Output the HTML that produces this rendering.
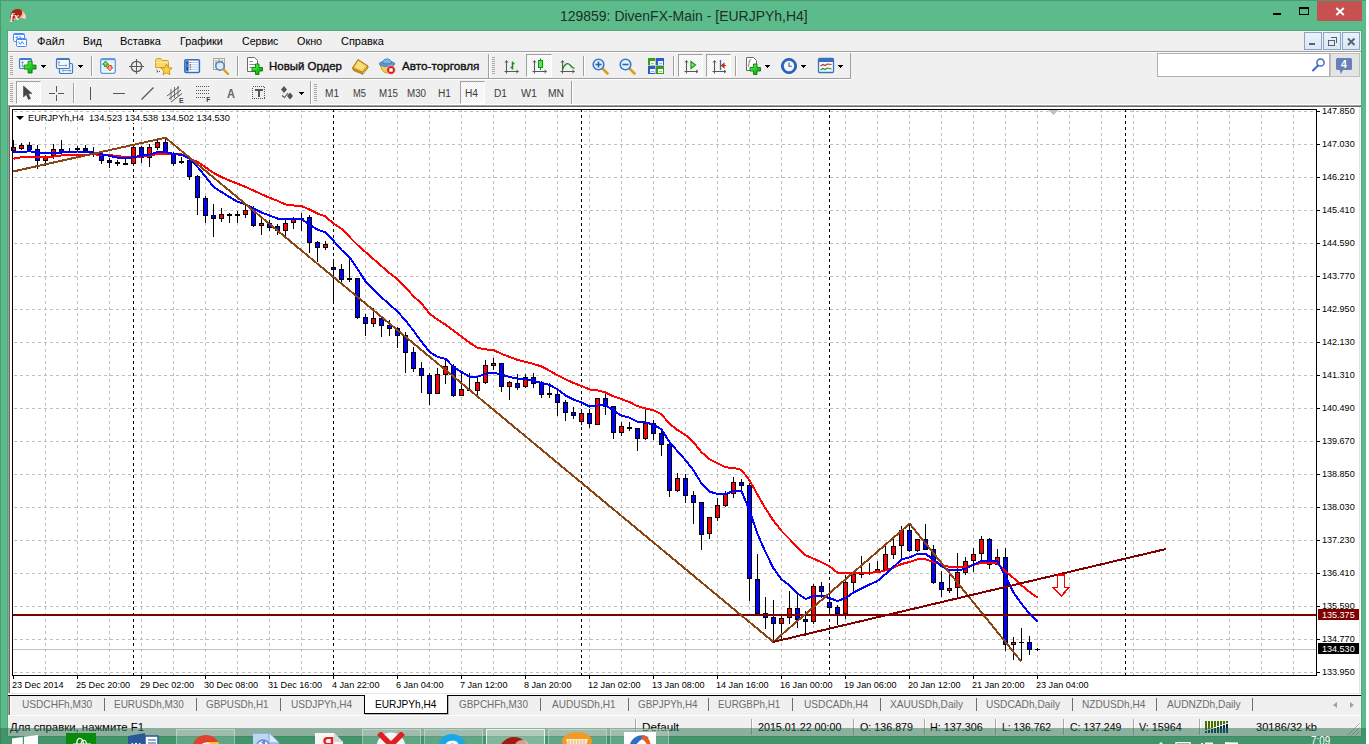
<!DOCTYPE html>
<html><head><meta charset="utf-8"><title>129859: DivenFX-Main - [EURJPYh,H4]</title>
<style>
html,body{margin:0;padding:0;background:#fff;}
body{width:1369px;height:744px;overflow:hidden;position:relative;font-family:"Liberation Sans",sans-serif;}
.abs{position:absolute;}
.sep{width:1px;background:#a0a0a0;}
</style></head><body>
<div class="abs" style="left:0;top:0;width:1366px;height:744px;background:#5CBB8B"></div>
<div class="abs" style="left:0;top:0;width:1366px;height:1px;background:#4a9a72"></div>
<div class="abs" style="left:0;top:0;width:1px;height:744px;background:#4a9a72"></div>
<div class="abs" style="left:7px;top:30px;width:1355px;height:707px;background:#50a87c"></div>
<div class="abs" style="left:8px;top:31px;width:1353px;height:705px;background:#F0F0F0"></div>
<div class="abs" style="left:560.30px;top:7.00px;font-size:15px;line-height:18px;color:#1c3026;white-space:pre;transform:scaleX(0.9314);transform-origin:0 0;">129859: DivenFX-Main - [EURJPYh,H4]</div>
<svg class="abs" style="left:9px;top:8px" width="18" height="14" viewBox="0 0 18 14"><path d="M1.2 11.5C0.2 5.5 4 0.8 8.5 1C13.5 1.2 17 5.5 16.8 10.8C14.5 10.8 11 9.2 8.2 10.2C6 11 4.8 13.2 2.6 13C1.8 12.8 1.4 12.3 1.2 11.5Z" fill="#c0301e"/><path d="M3 3.8C5 1.4 8.5 0.6 11 1.6C13 3 13.4 5.4 11.6 7.2C9.4 9 6 8.4 3.4 10Z" fill="#a82416"/><path d="M12.6 2.2C15.6 3.8 17 7 16.8 10.8C14.5 10.8 11.6 9.4 9 10C12.4 8.6 14.2 5.6 12.6 2.2Z" fill="#f4b8ac"/><path d="M14.4 4.2C16.2 6 16.9 8.4 16.8 10.8C15.6 10.7 14.2 10.3 12.8 9.9C14.6 8.6 15 6.4 14.4 4.2Z" fill="#fadcd6"/><text x="1.2" y="11.6" font-family="Liberation Serif" font-style="italic" font-weight="bold" font-size="10.5" fill="#fff">fx</text></svg>
<div class="abs" style="left:1273px;top:13px;width:8px;height:2px;background:#000;"></div>
<div class="abs" style="left:1299px;top:7px;width:8px;height:5px;border:1px solid #000;border-top:2px solid #000"></div>
<div class="abs" style="left:1317px;top:1px;width:45px;height:20px;background:#c75050;"></div>
<svg class="abs" style="left:1334px;top:6px" width="13" height="11" viewBox="0 0 13 11"><path d="M2.3 2L9.8 9M9.8 2L2.3 9" stroke="#fff" stroke-width="1.9" fill="none"/></svg>
<div class="abs" style="left:8px;top:51px;width:1353px;height:1px;background:#a0a0a0"></div>
<div class="abs" style="left:8px;top:52px;width:1353px;height:1px;background:#fff"></div>
<div class="abs" style="left:36.60px;top:33.92px;font-size:11.5px;line-height:14px;color:#000;white-space:pre;transform:scaleX(0.9691);transform-origin:0 0;">Файл</div>
<div class="abs" style="left:83.10px;top:33.92px;font-size:11.5px;line-height:14px;color:#000;white-space:pre;transform:scaleX(0.8988);transform-origin:0 0;">Вид</div>
<div class="abs" style="left:120.20px;top:33.92px;font-size:11.5px;line-height:14px;color:#000;white-space:pre;transform:scaleX(0.9569);transform-origin:0 0;">Вставка</div>
<div class="abs" style="left:180.30px;top:33.92px;font-size:11.5px;line-height:14px;color:#000;white-space:pre;transform:scaleX(0.9341);transform-origin:0 0;">Графики</div>
<div class="abs" style="left:241.60px;top:33.92px;font-size:11.5px;line-height:14px;color:#000;white-space:pre;transform:scaleX(0.9243);transform-origin:0 0;">Сервис</div>
<div class="abs" style="left:296.60px;top:33.92px;font-size:11.5px;line-height:14px;color:#000;white-space:pre;transform:scaleX(0.9393);transform-origin:0 0;">Окно</div>
<div class="abs" style="left:340.50px;top:33.92px;font-size:11.5px;line-height:14px;color:#000;white-space:pre;transform:scaleX(0.9509);transform-origin:0 0;">Справка</div>
<svg class="abs" style="left:11px;top:32px" width="18" height="17" viewBox="0 0 18 17"><rect x="2.5" y="1.5" width="11" height="8" rx="1" fill="#fff" stroke="#4a8af8"/><path d="M3 2.5H13" stroke="#4a8af8" stroke-width="1"/><path d="M4.5 5.5H6.5M5.8 4.3L6.8 5.5M8.5 4.3L10 6" stroke="#4a8af8" stroke-width="1.1" fill="none"/><rect x="5.5" y="6.5" width="10" height="8" rx="1" fill="#fff" stroke="#4a8af8"/><path d="M6 7.5H15" stroke="#4a8af8" stroke-width="1"/><path d="M7.3 9.4L9.3 12.4L11 9.6L13.2 12.5" stroke="#4a8af8" stroke-width="1" fill="none"/></svg>
<div class="abs" style="left:1304px;top:32px;width:16px;height:16px;border:1px solid #8da3c4;background:linear-gradient(#eaf2fb,#dbe8f6)"></div>
<div class="abs" style="left:1323px;top:32px;width:16px;height:16px;border:1px solid #8da3c4;background:linear-gradient(#eaf2fb,#dbe8f6)"></div>
<div class="abs" style="left:1342px;top:32px;width:16px;height:16px;border:1px solid #8da3c4;background:linear-gradient(#eaf2fb,#dbe8f6)"></div>
<div class="abs" style="left:1309px;top:43px;width:6px;height:2px;background:#5a6272;"></div>
<svg class="abs" style="left:1327px;top:36px" width="12" height="11" viewBox="0 0 12 11" shape-rendering="crispEdges"><path d="M3.5 1.5H9.5V6.5M1.5 4.5H7.5V9.5H1.5Z" stroke="#5a6272" stroke-width="1.4" fill="none"/></svg>
<svg class="abs" style="left:1346px;top:37px" width="12" height="11" viewBox="0 0 12 11"><path d="M2 1.5L8.5 8M8.5 1.5L2 8" stroke="#5a6272" stroke-width="1.9" fill="none"/></svg>
<div class="abs" style="left:8px;top:78px;width:843px;height:1px;background:#a0a0a0;"></div>
<div class="abs" style="left:8px;top:79px;width:843px;height:1px;background:#fff;"></div>
<div class="abs" style="left:850px;top:53px;width:1px;height:26px;background:#a0a0a0;"></div>
<svg class="abs" style="left:10px;top:56px" width="3" height="20" viewBox="0 0 3 20" shape-rendering="crispEdges"><rect x="0" y="0" width="3" height="1" fill="#a8a8a8"/><rect x="0" y="2" width="3" height="1" fill="#a8a8a8"/><rect x="0" y="4" width="3" height="1" fill="#a8a8a8"/><rect x="0" y="6" width="3" height="1" fill="#a8a8a8"/><rect x="0" y="8" width="3" height="1" fill="#a8a8a8"/><rect x="0" y="10" width="3" height="1" fill="#a8a8a8"/><rect x="0" y="12" width="3" height="1" fill="#a8a8a8"/><rect x="0" y="14" width="3" height="1" fill="#a8a8a8"/><rect x="0" y="16" width="3" height="1" fill="#a8a8a8"/><rect x="0" y="18" width="3" height="1" fill="#a8a8a8"/></svg>
<svg class="abs" style="left:18px;top:56px" width="20" height="19" viewBox="0 0 20 19"><defs><linearGradient id="gp" x1="0" y1="0" x2="1" y2="1"><stop offset="0" stop-color="#7dff7d"/><stop offset="0.5" stop-color="#22d022"/><stop offset="1" stop-color="#0a8a0a"/></linearGradient></defs><rect x="1.5" y="2.5" width="12" height="10" rx="1.2" fill="#f2f7ff" stroke="#3f7cc4" stroke-width="1.2"/><path d="M2 3.2H13" stroke="#3f7cc4" stroke-width="1.6"/><path d="M4.5 5.5V11M3 7L4.5 5.5L6 7M3 9.5L4.5 11L6 9.5" stroke="#7f9cc4" stroke-width="0.9" fill="none"/><path d="M10.1 5.2H14.1V9.1H18V13.1H14.1V17H10.1V13.1H6.2V9.1H10.1Z" fill="url(#gp)" stroke="#0a7a0a" stroke-width="0.9"/></svg>
<svg class="abs" style="left:41px;top:65px" width="5" height="3" viewBox="0 0 5 3" shape-rendering="crispEdges"><rect x="0" y="0" width="5" height="1" fill="#000"/><rect x="1" y="1" width="3" height="1" fill="#000"/><rect x="2" y="2" width="1" height="1" fill="#000"/></svg>
<svg class="abs" style="left:55px;top:56px" width="20" height="19" viewBox="0 0 20 19"><rect x="4.5" y="7.5" width="13" height="10" rx="1.2" fill="#eef4fd" stroke="#3f7cc4" stroke-width="1.2"/><path d="M7 14.5H16M7 14.5L8.5 13.3M7 14.5L8.5 15.7M16 14.5L14.5 13.3M16 14.5L14.5 15.7" stroke="#7f9cc4" stroke-width="0.9" fill="none"/><rect x="1.5" y="2.5" width="13" height="10" rx="1.2" fill="#f4f8ff" stroke="#3f7cc4" stroke-width="1.2"/><path d="M2 3.2H14" stroke="#3f7cc4" stroke-width="1.6"/><path d="M4 5.5V10.5M3 6.7L4 5.5L5 6.7M4 9.5H12M12 9.5L10.5 8.3M12 9.5L10.5 10.7" stroke="#7f9cc4" stroke-width="0.9" fill="none"/></svg>
<svg class="abs" style="left:78px;top:65px" width="5" height="3" viewBox="0 0 5 3" shape-rendering="crispEdges"><rect x="0" y="0" width="5" height="1" fill="#000"/><rect x="1" y="1" width="3" height="1" fill="#000"/><rect x="2" y="2" width="1" height="1" fill="#000"/></svg>
<div class="abs" style="left:91px;top:56px;width:1px;height:20px;background:#a0a0a0;"></div><div class="abs" style="left:92px;top:56px;width:1px;height:20px;background:#fff;"></div>
<svg class="abs" style="left:99px;top:57px" width="18" height="18" viewBox="0 0 18 18"><rect x="1.7" y="1.7" width="14.6" height="14.6" rx="1.8" fill="#f8fbff" stroke="#5b9bdc" stroke-width="1.3"/><path d="M2 2.6H16" stroke="#5b9bdc" stroke-width="1.4"/><path d="M11 5.5H15M11 8.5H15M4 11.5H8M4 13.5H8" stroke="#d4dce8" stroke-width="1"/><path d="M3.6 7.3L6.6 4L9.6 7.3H8V9.6H5.2V7.3Z" fill="#7fdc7f" stroke="#189018" stroke-width="1"/><path d="M7.9 10.4L10.9 13.9L13.9 10.4H12.3V8.4H9.5V10.4Z" fill="#ffb090" stroke="#d84818" stroke-width="1"/></svg>
<svg class="abs" style="left:128px;top:58px" width="18" height="18" viewBox="0 0 18 18"><circle cx="8.5" cy="8.5" r="5.2" fill="none" stroke="#5a5a5a" stroke-width="1.3"/><path d="M8.5 1V16M1 8.5H16" stroke="#5a5a5a" stroke-width="1.1"/></svg>
<svg class="abs" style="left:154px;top:56px" width="20" height="20" viewBox="0 0 20 20"><path d="M1.5 4.5Q1.5 2.5 3.5 2.5H7L8.5 4.5H13.5Q14.5 4.5 14.5 5.5V11.5H1.5Z" fill="#f8d870" stroke="#d4a020" stroke-width="1"/><path d="M1.5 6.5H14.5" stroke="#fbe9a8" stroke-width="1"/><path d="M3 13.5V17M3 15.5H6" stroke="#555" stroke-width="1" stroke-dasharray="1 1"/><path d="M12.5 8L14.2 11.6L18.2 12.1L15.3 14.8L16 18.7L12.5 16.8L9 18.7L9.7 14.8L6.8 12.1L10.8 11.6Z" fill="#f8d040" stroke="#c89010" stroke-width="0.9"/></svg>
<svg class="abs" style="left:183px;top:57px" width="18" height="18" viewBox="0 0 18 18"><rect x="1.8" y="2.8" width="14.6" height="12.6" rx="1.2" fill="#fff" stroke="#2f6fc0" stroke-width="1.5"/><rect x="2.5" y="3.5" width="3.2" height="11" fill="#3a78c8"/><path d="M4.1 5V7M4.1 10V13" stroke="#1a3a70" stroke-width="1.1"/><path d="M7.5 5.5H15.5M7.5 7.8H15.5M7.5 10.1H15.5M7.5 12.4H15.5" stroke="#b8ccf0" stroke-width="1"/><path d="M6.6 5.5H7.8M6.6 12.4H7.8" stroke="#e02020" stroke-width="1.2"/><path d="M6.6 7.8H7.8M6.6 10.1H7.8" stroke="#203020" stroke-width="1.2"/></svg>
<svg class="abs" style="left:211px;top:56px" width="20" height="20" viewBox="0 0 20 20"><rect x="2.5" y="2.5" width="11" height="11" fill="#f0efe8" stroke="#b0a890" stroke-width="1"/><path d="M5 4V9M8 3V8M11 4V8" stroke="#8a8a8a" stroke-width="1"/><circle cx="9" cy="10" r="4.2" fill="#d8eaf8" fill-opacity="0.85" stroke="#4a80c4" stroke-width="1.5"/><path d="M12.3 13.2L17 18" stroke="#d8a020" stroke-width="2.4" stroke-linecap="round"/></svg>
<div class="abs" style="left:237px;top:56px;width:1px;height:20px;background:#a0a0a0;"></div><div class="abs" style="left:238px;top:56px;width:1px;height:20px;background:#fff;"></div>
<svg class="abs" style="left:245px;top:56px" width="19" height="20" viewBox="0 0 19 20"><path d="M2.5 1.5H9.5L12.5 4.5V15.5H2.5Z" fill="#fff" stroke="#6a6a6a" stroke-width="1"/><path d="M4.5 5.5H8M4.5 8.5H10M4.5 11.5H7" stroke="#8a8a8a" stroke-width="1"/><path d="M7 11.5H10.5V8H14V11.5H17.5V15H14V18.5H10.5V15H7Z" fill="url(#gp)" stroke="#0a7a0a" stroke-width="0.9"/></svg>
<div class="abs" style="left:268.50px;top:59.49px;font-size:11px;line-height:14px;color:#101010;white-space:pre;transform:scaleX(1.0415);transform-origin:0 0;-webkit-text-stroke:0.35px #101010;">Новый Ордер</div>
<svg class="abs" style="left:351px;top:57px" width="19" height="18" viewBox="0 0 19 18"><path d="M7 2.5L17 9L11.5 15.5L1.5 11Z" fill="#f0c040" stroke="#a87010" stroke-width="1"/><path d="M7.3 4.3L14.8 9.2L11 13.5L3.8 10.3Z" fill="#f8de80"/><path d="M1.5 11L2.5 13.5L11.8 17.3L11.5 15.5" fill="#c89020" stroke="#a87010" stroke-width="0.8"/><path d="M11.8 17.3L17 10.8L17 9" fill="#d8a028" stroke="#a87010" stroke-width="0.8"/></svg>
<svg class="abs" style="left:378px;top:56px" width="19" height="20" viewBox="0 0 19 20"><path d="M2.5 8.5C2.5 13.5 6 17 9 17C12 17 15.5 13.5 15.5 8.5Z" fill="#f4cc50" stroke="#c09018" stroke-width="0.9"/><ellipse cx="9" cy="7.8" rx="7.8" ry="2.6" fill="#5b9bdc" stroke="#3a70b0" stroke-width="0.8"/><path d="M4.5 7C4.5 1.5 13.5 1.5 13.5 7C11 8.2 7 8.2 4.5 7Z" fill="#7ab4ec" stroke="#3a70b0" stroke-width="0.8"/><circle cx="13" cy="14" r="4.3" fill="#e01818" stroke="#f8d8d0" stroke-width="0.7"/><rect x="11.3" y="12.3" width="3.4" height="3.4" rx="0.5" fill="#fff"/></svg>
<div class="abs" style="left:402.00px;top:59.49px;font-size:11px;line-height:14px;color:#101010;white-space:pre;transform:scaleX(1.0655);transform-origin:0 0;-webkit-text-stroke:0.35px #101010;">Авто-торговля</div>
<div class="abs" style="left:488px;top:54px;width:1px;height:24px;background:#a0a0a0;"></div><div class="abs" style="left:489px;top:54px;width:1px;height:24px;background:#fff;"></div>
<svg class="abs" style="left:492px;top:57px" width="3" height="18" viewBox="0 0 3 18" shape-rendering="crispEdges"><rect x="0" y="0" width="3" height="1" fill="#a8a8a8"/><rect x="0" y="2" width="3" height="1" fill="#a8a8a8"/><rect x="0" y="4" width="3" height="1" fill="#a8a8a8"/><rect x="0" y="6" width="3" height="1" fill="#a8a8a8"/><rect x="0" y="8" width="3" height="1" fill="#a8a8a8"/><rect x="0" y="10" width="3" height="1" fill="#a8a8a8"/><rect x="0" y="12" width="3" height="1" fill="#a8a8a8"/><rect x="0" y="14" width="3" height="1" fill="#a8a8a8"/><rect x="0" y="16" width="3" height="1" fill="#a8a8a8"/></svg>
<svg class="abs" style="left:503px;top:58px" width="18" height="18" viewBox="0 0 18 18"><path d="M3.5 3V15.5M1.5 13.5H15" stroke="#585858" stroke-width="1.1" fill="none"/><path d="M2 4.5L3.5 2.5L5 4.5M13.5 12L15.5 13.5L13.5 15" stroke="#585858" stroke-width="1" fill="none"/><path d="M9.5 3.5V11.5M7.5 9.5H9.5M9.5 5.5H11.5" stroke="#1a8a1a" stroke-width="1.5" fill="none"/></svg>
<div class="abs" style="left:526px;top:54px;width:24px;height:21px;border:1px solid #a0a0a0;border-right-color:#fff;border-bottom-color:#fff;background:repeating-conic-gradient(#fff 0% 25%,#f0f0f0 0% 50%) 0 0/2px 2px"></div>
<svg class="abs" style="left:531px;top:58px" width="18" height="18" viewBox="0 0 18 18"><path d="M3.5 3V15.5M1.5 13.5H15" stroke="#585858" stroke-width="1.1" fill="none"/><path d="M2 4.5L3.5 2.5L5 4.5M13.5 12L15.5 13.5L13.5 15" stroke="#585858" stroke-width="1" fill="none"/><path d="M9.5 0.5V12" stroke="#0a8a0a" stroke-width="1"/><rect x="7.5" y="2.5" width="4" height="7" fill="#50e850" stroke="#0a9a0a" stroke-width="1"/></svg>
<svg class="abs" style="left:559px;top:58px" width="18" height="18" viewBox="0 0 18 18"><path d="M3.5 3V15.5M1.5 13.5H15" stroke="#585858" stroke-width="1.1" fill="none"/><path d="M2 4.5L3.5 2.5L5 4.5M13.5 12L15.5 13.5L13.5 15" stroke="#585858" stroke-width="1" fill="none"/><path d="M3.5 11.5C6 5 9 4.5 11 7C12.5 9 14 10 15.5 10.5" stroke="#1a8a1a" stroke-width="1.3" fill="none"/></svg>
<div class="abs" style="left:583px;top:56px;width:1px;height:20px;background:#a0a0a0;"></div><div class="abs" style="left:584px;top:56px;width:1px;height:20px;background:#fff;"></div>
<svg class="abs" style="left:591px;top:57px" width="19" height="19" viewBox="0 0 19 19"><path d="M11.5 11.5L16.5 16.5" stroke="#d8a020" stroke-width="2.6" stroke-linecap="round"/><circle cx="7.5" cy="7.5" r="5.3" fill="#e4f0fc" stroke="#3a78c8" stroke-width="1.6"/><path d="M4.5 7.5H10.5" stroke="#2a60b0" stroke-width="1.6"/><path d="M7.5 4.5V10.5" stroke="#2a60b0" stroke-width="1.6"/></svg>
<svg class="abs" style="left:618px;top:57px" width="19" height="19" viewBox="0 0 19 19"><path d="M11.5 11.5L16.5 16.5" stroke="#d8a020" stroke-width="2.6" stroke-linecap="round"/><circle cx="7.5" cy="7.5" r="5.3" fill="#e4f0fc" stroke="#3a78c8" stroke-width="1.6"/><path d="M4.5 7.5H10.5" stroke="#2a60b0" stroke-width="1.6"/></svg>
<svg class="abs" style="left:648px;top:58px" width="16" height="16" viewBox="0 0 16 16" shape-rendering="crispEdges"><rect x="0" y="0" width="8" height="8" fill="#3a9a20"/><rect x="8" y="0" width="8" height="8" fill="#2a5cc8"/><rect x="0" y="8" width="8" height="8" fill="#2a5cc8"/><rect x="8" y="8" width="8" height="8" fill="#3a9a20"/><path d="M7.5 0V16M0 7.5H16" stroke="#f0f0f0" stroke-width="0.6"/><rect x="1.5" y="3" width="5" height="3.5" fill="#f4fff0"/><rect x="9.5" y="3" width="5" height="3.5" fill="#eef4ff"/><rect x="1.5" y="11" width="5" height="3.5" fill="#eef4ff"/><rect x="9.5" y="11" width="5" height="3.5" fill="#f4fff0"/><path d="M2.5 5H5.5M10.5 5H13.5M2.5 13H5.5M10.5 13H13.5" stroke="#8aa" stroke-width="0.8"/></svg>
<div class="abs" style="left:673px;top:56px;width:1px;height:20px;background:#a0a0a0;"></div><div class="abs" style="left:674px;top:56px;width:1px;height:20px;background:#fff;"></div>
<div class="abs" style="left:678px;top:54px;width:23px;height:21px;border:1px solid #a0a0a0;border-right-color:#fff;border-bottom-color:#fff;background:repeating-conic-gradient(#fff 0% 25%,#f0f0f0 0% 50%) 0 0/2px 2px"></div>
<div class="abs" style="left:706px;top:54px;width:23px;height:21px;border:1px solid #a0a0a0;border-right-color:#fff;border-bottom-color:#fff;background:repeating-conic-gradient(#fff 0% 25%,#f0f0f0 0% 50%) 0 0/2px 2px"></div>
<svg class="abs" style="left:682px;top:58px" width="18" height="18" viewBox="0 0 18 18"><path d="M4.5 3V15.5M2.5 13.5H15.5" stroke="#585858" stroke-width="1.1" fill="none"/><path d="M3 4.5L4.5 2.5L6 4.5M14 12L16 13.5L14 15" stroke="#585858" stroke-width="1" fill="none"/><path d="M9 3.5L13.5 7L9 10.5Z" fill="#8fe08f" stroke="#18a018" stroke-width="1.3"/></svg>
<svg class="abs" style="left:710px;top:58px" width="18" height="18" viewBox="0 0 18 18"><path d="M4.5 3V15.5M2.5 13.5H15.5" stroke="#585858" stroke-width="1.1" fill="none"/><path d="M3 4.5L4.5 2.5L6 4.5M14 12L16 13.5L14 15" stroke="#585858" stroke-width="1" fill="none"/><path d="M10.5 2V12" stroke="#2a6ab0" stroke-width="1.3"/><path d="M16 7.5H12M14 5.5L11.5 7.5L14 9.5Z" stroke="#c03010" stroke-width="1.1" fill="#c03010"/></svg>
<div class="abs" style="left:735px;top:56px;width:1px;height:20px;background:#a0a0a0;"></div><div class="abs" style="left:736px;top:56px;width:1px;height:20px;background:#fff;"></div>
<svg class="abs" style="left:744px;top:56px" width="19" height="20" viewBox="0 0 19 20"><path d="M2.5 1.5H9.5L12.5 4.5V14.5H2.5Z" fill="#fff" stroke="#6a6a6a" stroke-width="1"/><text x="4" y="9" font-family="Liberation Serif" font-style="italic" font-size="8" fill="#444">f</text><path d="M6 11.5H9.5V8H13V11.5H16.5V15H13V18.5H9.5V15H6Z" fill="url(#gp)" stroke="#0a7a0a" stroke-width="0.9"/></svg>
<svg class="abs" style="left:765px;top:65px" width="5" height="3" viewBox="0 0 5 3" shape-rendering="crispEdges"><rect x="0" y="0" width="5" height="1" fill="#000"/><rect x="1" y="1" width="3" height="1" fill="#000"/><rect x="2" y="2" width="1" height="1" fill="#000"/></svg>
<svg class="abs" style="left:780px;top:57px" width="18" height="18" viewBox="0 0 18 18"><circle cx="9" cy="9" r="7.6" fill="#2a66c8" stroke="#1a4898" stroke-width="0.8"/><circle cx="9" cy="9" r="5.2" fill="#f4f8ff"/><path d="M9 5.5V9.3H11.8" stroke="#555" stroke-width="1.1" fill="none"/></svg>
<svg class="abs" style="left:801px;top:65px" width="5" height="3" viewBox="0 0 5 3" shape-rendering="crispEdges"><rect x="0" y="0" width="5" height="1" fill="#000"/><rect x="1" y="1" width="3" height="1" fill="#000"/><rect x="2" y="2" width="1" height="1" fill="#000"/></svg>
<svg class="abs" style="left:817px;top:57px" width="18" height="18" viewBox="0 0 18 18"><rect x="1.5" y="1.5" width="15" height="14" rx="1" fill="#f4f8ff" stroke="#3a70c0" stroke-width="1.3"/><rect x="2" y="2" width="14" height="3" fill="#3a70c0"/><path d="M3.5 9L6 7.5L8 8.5L10.5 7L14.5 7.5" stroke="#c03020" stroke-width="1.1" fill="none"/><path d="M3.5 13L6 11.5L8 12.5L10.5 11L14.5 12" stroke="#209020" stroke-width="1.1" fill="none"/></svg>
<svg class="abs" style="left:838px;top:65px" width="5" height="3" viewBox="0 0 5 3" shape-rendering="crispEdges"><rect x="0" y="0" width="5" height="1" fill="#000"/><rect x="1" y="1" width="3" height="1" fill="#000"/><rect x="2" y="2" width="1" height="1" fill="#000"/></svg>
<div class="abs" style="left:1157px;top:53px;width:171px;height:22px;background:#fff;border:1px solid #b0b0b0"></div>
<svg class="abs" style="left:1311px;top:57px" width="16" height="16" viewBox="0 0 16 16"><circle cx="9.5" cy="5.5" r="3.6" fill="#fff" stroke="#3a68c0" stroke-width="1.5"/><path d="M7 8.5L2 13.5" stroke="#3a68c0" stroke-width="2" stroke-linecap="round"/></svg>
<div class="abs" style="left:1330px;top:53px;width:28px;height:22px;background:#e4e4e4;border:1px solid #c0c0c0"></div>
<svg class="abs" style="left:1335px;top:56px" width="20" height="20" viewBox="0 0 20 20"><path d="M2.5 2H15.5Q17 2 17 3.5V12.5Q17 14 15.5 14H8L6 18L4.6 14H2.5Q1 14 1 12.5V3.5Q1 2 2.5 2Z" fill="#6581b7"/><text x="6" y="11.8" font-family="Liberation Sans" font-weight="bold" font-size="10.5" fill="#fff">4</text></svg>
<svg class="abs" style="left:10px;top:83px" width="3" height="20" viewBox="0 0 3 20" shape-rendering="crispEdges"><rect x="0" y="0" width="3" height="1" fill="#a8a8a8"/><rect x="0" y="2" width="3" height="1" fill="#a8a8a8"/><rect x="0" y="4" width="3" height="1" fill="#a8a8a8"/><rect x="0" y="6" width="3" height="1" fill="#a8a8a8"/><rect x="0" y="8" width="3" height="1" fill="#a8a8a8"/><rect x="0" y="10" width="3" height="1" fill="#a8a8a8"/><rect x="0" y="12" width="3" height="1" fill="#a8a8a8"/><rect x="0" y="14" width="3" height="1" fill="#a8a8a8"/><rect x="0" y="16" width="3" height="1" fill="#a8a8a8"/><rect x="0" y="18" width="3" height="1" fill="#a8a8a8"/></svg>
<div class="abs" style="left:16px;top:81px;width:23px;height:21px;border:1px solid #a0a0a0;border-right-color:#fff;border-bottom-color:#fff;background:repeating-conic-gradient(#fff 0% 25%,#f0f0f0 0% 50%) 0 0/2px 2px"></div>
<svg class="abs" style="left:22px;top:85px" width="12" height="16" viewBox="0 0 12 16"><path d="M1.5 1L1.5 12L4.3 9.5L6.5 14.5L8.5 13.5L6.3 8.8L10 8.5Z" fill="#444" stroke="#444" stroke-width="0.6"/></svg>
<svg class="abs" style="left:48px;top:85px" width="17" height="17" viewBox="0 0 17 17" shape-rendering="crispEdges"><path d="M8.5 1V7M8.5 10V16M1 8.5H7M10 8.5H16" stroke="#555" stroke-width="1.1"/></svg>
<div class="abs" style="left:73px;top:83px;width:1px;height:20px;background:#a0a0a0;"></div><div class="abs" style="left:74px;top:83px;width:1px;height:20px;background:#fff;"></div>
<div class="abs" style="left:90px;top:87px;width:1px;height:13px;background:#555;"></div>
<div class="abs" style="left:113px;top:93px;width:12px;height:1px;background:#555;"></div>
<svg class="abs" style="left:140px;top:86px" width="15" height="15" viewBox="0 0 15 15"><path d="M1.5 13.5L13.5 1.5" stroke="#555" stroke-width="1.2"/></svg>
<svg class="abs" style="left:165px;top:84px" width="20" height="19" viewBox="0 0 20 19"><path d="M2 12L14 3M4 15L16 6M6 18L17 9.5" stroke="#555" stroke-width="1" fill="none"/><path d="M6 5V16M9.5 3V14M13 2V12" stroke="#555" stroke-width="0.8" fill="none"/><text x="14" y="18.5" font-family="Liberation Sans" font-weight="bold" font-size="7" fill="#444">E</text></svg>
<svg class="abs" style="left:195px;top:85px" width="18" height="18" viewBox="0 0 18 18" shape-rendering="crispEdges"><path d="M1 1.5H14M1 5.5H14M1 8.5H14M1 12.5H11" stroke="#555" stroke-width="1" stroke-dasharray="1 1"/><text x="11.2" y="17" font-family="Liberation Sans" font-weight="bold" font-size="6.5" fill="#333">F</text></svg>
<div class="abs" style="left:226.5px;top:87px;font-size:12px;line-height:14px;font-weight:bold;color:#666;transform:scaleX(0.92);transform-origin:0 0">A</div>
<svg class="abs" style="left:251px;top:85px" width="15" height="16" viewBox="0 0 15 16" shape-rendering="crispEdges"><rect x="1.5" y="1.5" width="12" height="12" fill="none" stroke="#555" stroke-width="1" stroke-dasharray="1 1"/><path d="M3.5 5H11.5M7.5 5V12" stroke="#555" stroke-width="2" fill="none"/></svg>
<svg class="abs" style="left:279px;top:85px" width="17" height="16" viewBox="0 0 17 16"><path d="M5 1L8 4.5L5 8L2 4.5Z" fill="#555"/><path d="M11 7.5L14 11L11 14.5L8 11Z" fill="#555"/><path d="M3 10.5L5.5 12.5L9 8" stroke="#555" stroke-width="1.1" fill="none"/></svg>
<svg class="abs" style="left:299px;top:92px" width="5" height="3" viewBox="0 0 5 3" shape-rendering="crispEdges"><rect x="0" y="0" width="5" height="1" fill="#000"/><rect x="1" y="1" width="3" height="1" fill="#000"/><rect x="2" y="2" width="1" height="1" fill="#000"/></svg>
<div class="abs" style="left:310px;top:81px;width:1px;height:24px;background:#a0a0a0;"></div><div class="abs" style="left:311px;top:81px;width:1px;height:24px;background:#fff;"></div>
<svg class="abs" style="left:314px;top:84px" width="3" height="18" viewBox="0 0 3 18" shape-rendering="crispEdges"><rect x="0" y="0" width="3" height="1" fill="#a8a8a8"/><rect x="0" y="2" width="3" height="1" fill="#a8a8a8"/><rect x="0" y="4" width="3" height="1" fill="#a8a8a8"/><rect x="0" y="6" width="3" height="1" fill="#a8a8a8"/><rect x="0" y="8" width="3" height="1" fill="#a8a8a8"/><rect x="0" y="10" width="3" height="1" fill="#a8a8a8"/><rect x="0" y="12" width="3" height="1" fill="#a8a8a8"/><rect x="0" y="14" width="3" height="1" fill="#a8a8a8"/><rect x="0" y="16" width="3" height="1" fill="#a8a8a8"/></svg>
<div class="abs" style="left:325.00px;top:87.03px;font-size:10px;line-height:13px;color:#3c3c3c;white-space:pre;transform:scaleX(1.0078);transform-origin:0 0;">M1</div>
<div class="abs" style="left:353.00px;top:87.03px;font-size:10px;line-height:13px;color:#3c3c3c;white-space:pre;transform:scaleX(0.9358);transform-origin:0 0;">M5</div>
<div class="abs" style="left:379.00px;top:87.03px;font-size:10px;line-height:13px;color:#3c3c3c;white-space:pre;transform:scaleX(0.9767);transform-origin:0 0;">M15</div>
<div class="abs" style="left:407.00px;top:87.03px;font-size:10px;line-height:13px;color:#3c3c3c;white-space:pre;transform:scaleX(0.9767);transform-origin:0 0;">M30</div>
<div class="abs" style="left:438.00px;top:87.03px;font-size:10px;line-height:13px;color:#3c3c3c;white-space:pre;transform:scaleX(1.0169);transform-origin:0 0;">H1</div>
<div class="abs" style="left:460px;top:81px;width:23px;height:21px;border:1px solid #a0a0a0;border-right-color:#fff;border-bottom-color:#fff;background:repeating-conic-gradient(#fff 0% 25%,#f0f0f0 0% 50%) 0 0/2px 2px"></div>
<div class="abs" style="left:465.00px;top:87.03px;font-size:10px;line-height:13px;color:#3c3c3c;white-space:pre;transform:scaleX(1.0169);transform-origin:0 0;">H4</div>
<div class="abs" style="left:494.00px;top:87.03px;font-size:10px;line-height:13px;color:#3c3c3c;white-space:pre;transform:scaleX(1.0169);transform-origin:0 0;">D1</div>
<div class="abs" style="left:521.00px;top:87.03px;font-size:10px;line-height:13px;color:#3c3c3c;white-space:pre;transform:scaleX(1.0667);transform-origin:0 0;">W1</div>
<div class="abs" style="left:548.00px;top:87.03px;font-size:10px;line-height:13px;color:#3c3c3c;white-space:pre;transform:scaleX(1.0288);transform-origin:0 0;">MN</div>
<div class="abs" style="left:571px;top:81px;width:1px;height:24px;background:#a0a0a0;"></div><div class="abs" style="left:572px;top:81px;width:1px;height:24px;background:#fff;"></div>
<div class="abs" style="left:8px;top:104px;width:1353px;height:1px;background:#fff"></div>
<div class="abs" style="left:8px;top:105px;width:1353px;height:1px;background:#a0a0a0"></div>
<div class="abs" style="left:8px;top:106px;width:1353px;height:1px;background:#696969"></div>
<div class="abs" style="left:8px;top:106px;width:1px;height:587px;background:#a0a0a0"></div>
<div class="abs" style="left:9px;top:106px;width:1px;height:587px;background:#696969"></div>
<div class="abs" style="left:10px;top:107px;width:1351px;height:588px;background:#fff"></div>
<svg class="abs" style="left:10px;top:107px" width="1351" height="588" viewBox="10 107 1351 588" shape-rendering="crispEdges">
<rect x="10" y="107" width="1351" height="588" fill="#fff"/>
<path d="M14 111.5H1316M14 144.5H1316M14 177.5H1316M14 210.5H1316M14 243.5H1316M14 276.5H1316M14 309.5H1316M14 342.5H1316M14 375.5H1316M14 408.5H1316M14 441.5H1316M14 474.5H1316M14 507.5H1316M14 540.5H1316M14 573.5H1316M14 606.5H1316M14 639.5H1316M14 672.5H1316" stroke="#c0c0c0" stroke-width="1" stroke-dasharray="3 3" fill="none"/>
<path d="M45.5 109V675M77.5 109V675M109.5 109V675M141.5 109V675M173.5 109V675M205.5 109V675M237.5 109V675M269.5 109V675M301.5 109V675M365.5 109V675M397.5 109V675M429.5 109V675M461.5 109V675M493.5 109V675M525.5 109V675M557.5 109V675M589.5 109V675M621.5 109V675M653.5 109V675M685.5 109V675M717.5 109V675M749.5 109V675M781.5 109V675M813.5 109V675M845.5 109V675M877.5 109V675M909.5 109V675M941.5 109V675M973.5 109V675M1005.5 109V675M1037.5 109V675M1069.5 109V675M1101.5 109V675M1133.5 109V675M1165.5 109V675M1197.5 109V675M1229.5 109V675M1261.5 109V675M1293.5 109V675" stroke="#c0c0c0" stroke-width="1" stroke-dasharray="3 3" fill="none"/>
<path d="M133.5 109V675M333.5 109V675M581.5 109V675M829.5 109V675M1125.5 109V675" stroke="#000" stroke-width="1" stroke-dasharray="3 3" fill="none"/>
<path d="M1049 110H1058L1053.5 115Z" fill="#c0c0c0"/>
<path d="M13 649.5H1316" stroke="#c0c0c0" stroke-width="1"/>
<path d="M13.5 140V151M21.5 143V150M29.5 142V152M37.5 145V169M45.5 155V166M53.5 144V159M61.5 140V154M69.5 148V153M67 152.5H72M77.5 146V151M85.5 145V153M93.5 147V157M91 152.5H96M101.5 152V164M109.5 158V168M117.5 160V166M125.5 159V165M133.5 146V165M141.5 146V163M149.5 144V167M157.5 140V150M165.5 137V154M173.5 152V166M181.5 157V164M189.5 159V180M197.5 175V215M205.5 196V223M213.5 204V237M221.5 208V222M229.5 213V223M237.5 211V223M245.5 204V218M253.5 206V227M261.5 219V235M269.5 220V231M277.5 224V235M285.5 220V236M293.5 217V229M301.5 213V231M299 218.5H304M309.5 215V253M317.5 241V262M325.5 241V250M333.5 260V303M341.5 264V282M349.5 259V282M357.5 278V319M365.5 314V336M373.5 308V327M381.5 317V337M389.5 320V336M397.5 327V348M405.5 332V373M413.5 347V372M421.5 362V393M429.5 373V405M437.5 368V394M445.5 360V384M453.5 364V397M461.5 373V396M469.5 373V391M467 390.5H472M477.5 376V395M485.5 360V384M493.5 358V370M501.5 363V392M509.5 381V400M517.5 374V390M525.5 374V388M533.5 373V388M541.5 381V398M549.5 383V398M557.5 390V416M565.5 400V421M573.5 407V419M581.5 409V425M589.5 409V428M597.5 398V425M605.5 393V415M613.5 406V439M621.5 422V436M629.5 422V431M637.5 428V451M645.5 408V440M653.5 420V440M661.5 429V456M669.5 444V497M677.5 473V492M685.5 474V503M693.5 491V524M701.5 502V550M709.5 517V539M717.5 498V521M725.5 491V507M733.5 477V498M741.5 479V491M749.5 483V601M757.5 554V614M765.5 597V629M773.5 600V642M781.5 616V639M789.5 591V624M797.5 594V628M805.5 611V636M813.5 584V624M821.5 582V598M829.5 584V615M837.5 605V625M845.5 575V619M853.5 573V591M861.5 556V578M869.5 563V575M867 572.5H872M877.5 561V573M885.5 546V570M893.5 539V559M901.5 526V560M909.5 523V552M917.5 539V552M925.5 524V550M933.5 545V584M941.5 571V597M949.5 573V593M957.5 553V598M965.5 557V575M973.5 548V572M981.5 536V560M989.5 538V569M997.5 549V565M1005.5 548V651M1013.5 637V660M1021.5 628V660M1019 642.5H1024M1029.5 636V655M1037.5 648V651M1035 649.5H1040" stroke="#000" stroke-width="1" fill="none"/>
<path d="M11.5 147.5H15.5V150.5H11.5ZM19.5 145.5H23.5V148.5H19.5ZM43.5 157.5H47.5V160.5H43.5ZM51.5 149.5H55.5V155.5H51.5ZM131.5 147.5H135.5V163.5H131.5ZM147.5 147.5H151.5V157.5H147.5ZM155.5 142.5H159.5V147.5H155.5ZM219.5 214.5H223.5V218.5H219.5ZM243.5 210.5H247.5V214.5H243.5ZM259.5 223.5H263.5V225.5H259.5ZM283.5 223.5H287.5V230.5H283.5ZM291.5 219.5H295.5V222.5H291.5ZM323.5 244.5H327.5V247.5H323.5ZM371.5 318.5H375.5V323.5H371.5ZM435.5 374.5H439.5V393.5H435.5ZM443.5 366.5H447.5V374.5H443.5ZM459.5 389.5H463.5V395.5H459.5ZM475.5 382.5H479.5V390.5H475.5ZM483.5 365.5H487.5V382.5H483.5ZM491.5 363.5H495.5V365.5H491.5ZM507.5 382.5H511.5V386.5H507.5ZM523.5 377.5H527.5V386.5H523.5ZM579.5 413.5H583.5V421.5H579.5ZM595.5 398.5H599.5V424.5H595.5ZM619.5 426.5H623.5V432.5H619.5ZM643.5 423.5H647.5V438.5H643.5ZM675.5 478.5H679.5V490.5H675.5ZM707.5 517.5H711.5V533.5H707.5ZM715.5 505.5H719.5V517.5H715.5ZM723.5 494.5H727.5V505.5H723.5ZM731.5 482.5H735.5V493.5H731.5ZM779.5 618.5H783.5V623.5H779.5ZM787.5 608.5H791.5V617.5H787.5ZM811.5 586.5H815.5V621.5H811.5ZM843.5 582.5H847.5V613.5H843.5ZM851.5 574.5H855.5V582.5H851.5ZM859.5 573.5H863.5V574.5H859.5ZM875.5 569.5H879.5V572.5H875.5ZM883.5 554.5H887.5V569.5H883.5ZM891.5 546.5H895.5V554.5H891.5ZM899.5 530.5H903.5V545.5H899.5ZM915.5 539.5H919.5V550.5H915.5ZM947.5 588.5H951.5V590.5H947.5ZM955.5 572.5H959.5V587.5H955.5ZM963.5 561.5H967.5V572.5H963.5ZM971.5 554.5H975.5V560.5H971.5ZM979.5 539.5H983.5V553.5H979.5ZM995.5 557.5H999.5V564.5H995.5ZM1011.5 642.5H1015.5V644.5H1011.5Z" stroke="#000" stroke-width="1" fill="#f00"/>
<path d="M27.5 145.5H31.5V149.5H27.5ZM35.5 149.5H39.5V160.5H35.5ZM59.5 149.5H63.5V152.5H59.5ZM75.5 148.5H79.5V149.5H75.5ZM83.5 148.5H87.5V150.5H83.5ZM99.5 155.5H103.5V160.5H99.5ZM107.5 160.5H111.5V162.5H107.5ZM115.5 162.5H119.5V163.5H115.5ZM123.5 163.5H127.5V164.5H123.5ZM139.5 147.5H143.5V157.5H139.5ZM163.5 142.5H167.5V152.5H163.5ZM171.5 154.5H175.5V163.5H171.5ZM179.5 161.5H183.5V162.5H179.5ZM187.5 160.5H191.5V176.5H187.5ZM195.5 176.5H199.5V197.5H195.5ZM203.5 198.5H207.5V215.5H203.5ZM211.5 215.5H215.5V218.5H211.5ZM227.5 214.5H231.5V215.5H227.5ZM235.5 214.5H239.5V215.5H235.5ZM251.5 210.5H255.5V225.5H251.5ZM267.5 223.5H271.5V227.5H267.5ZM275.5 226.5H279.5V230.5H275.5ZM307.5 217.5H311.5V242.5H307.5ZM315.5 242.5H319.5V247.5H315.5ZM331.5 267.5H335.5V269.5H331.5ZM339.5 269.5H343.5V279.5H339.5ZM347.5 278.5H351.5V279.5H347.5ZM355.5 278.5H359.5V317.5H355.5ZM363.5 317.5H367.5V323.5H363.5ZM379.5 318.5H383.5V325.5H379.5ZM387.5 325.5H391.5V328.5H387.5ZM395.5 328.5H399.5V335.5H395.5ZM403.5 335.5H407.5V352.5H403.5ZM411.5 352.5H415.5V368.5H411.5ZM419.5 368.5H423.5V375.5H419.5ZM427.5 375.5H431.5V393.5H427.5ZM451.5 366.5H455.5V395.5H451.5ZM499.5 363.5H503.5V386.5H499.5ZM515.5 383.5H519.5V387.5H515.5ZM531.5 377.5H535.5V383.5H531.5ZM539.5 383.5H543.5V394.5H539.5ZM547.5 393.5H551.5V394.5H547.5ZM555.5 394.5H559.5V402.5H555.5ZM563.5 402.5H567.5V412.5H563.5ZM571.5 412.5H575.5V415.5H571.5ZM587.5 413.5H591.5V423.5H587.5ZM603.5 398.5H607.5V406.5H603.5ZM611.5 406.5H615.5V432.5H611.5ZM627.5 427.5H631.5V428.5H627.5ZM635.5 428.5H639.5V438.5H635.5ZM651.5 423.5H655.5V433.5H651.5ZM659.5 433.5H663.5V444.5H659.5ZM667.5 444.5H671.5V490.5H667.5ZM683.5 478.5H687.5V495.5H683.5ZM691.5 495.5H695.5V502.5H691.5ZM699.5 502.5H703.5V534.5H699.5ZM739.5 482.5H743.5V485.5H739.5ZM747.5 485.5H751.5V578.5H747.5ZM755.5 579.5H759.5V613.5H755.5ZM763.5 613.5H767.5V617.5H763.5ZM771.5 617.5H775.5V623.5H771.5ZM795.5 608.5H799.5V619.5H795.5ZM803.5 619.5H807.5V621.5H803.5ZM819.5 586.5H823.5V591.5H819.5ZM827.5 602.5H831.5V607.5H827.5ZM835.5 607.5H839.5V613.5H835.5ZM907.5 530.5H911.5V550.5H907.5ZM923.5 539.5H927.5V549.5H923.5ZM931.5 549.5H935.5V582.5H931.5ZM939.5 582.5H943.5V589.5H939.5ZM987.5 539.5H991.5V564.5H987.5ZM1003.5 557.5H1007.5V644.5H1003.5ZM1027.5 642.5H1031.5V649.5H1027.5Z" stroke="#000" stroke-width="1" fill="#00f"/>
<rect x="13" y="614" width="1303" height="2" fill="#800000"/>
</svg>
<svg class="abs" style="left:10px;top:107px" width="1351" height="588" viewBox="10 107 1351 588">
<defs><clipPath id="cp"><rect x="13" y="110" width="1304" height="565"/></clipPath></defs>
<g clip-path="url(#cp)" fill="none" stroke-linejoin="round" shape-rendering="crispEdges">
<polyline points="13.5,158.7 21.5,157.3 29.5,157.1 37.5,157.1 45.5,157.1 53.5,156.6 61.5,155.4 69.5,155.1 77.5,154.8 85.5,154.6 93.5,154.4 101.5,154.8 109.5,155.1 117.5,156.1 125.5,157.1 133.5,157.3 141.5,156.6 149.5,155.6 157.5,154.03 165.5,154.03 173.5,154.03 181.5,154.44 189.5,158.47 197.5,161.9 205.5,167.3 213.5,172.9 221.5,177 229.5,180.5 237.5,183.6 245.5,186.9 253.5,190.5 261.5,194.2 269.5,197.8 277.5,200.8 285.5,204.44 293.5,205.44 301.5,206.05 309.5,209.48 317.5,213.51 325.5,216.53 333.5,223.59 341.5,228.83 349.5,236.9 357.5,244.96 365.5,252.02 373.5,259.07 381.5,266.13 389.5,273.19 397.5,279.23 405.5,287.3 413.5,296.37 421.5,303.43 429.5,313.51 437.5,319.56 445.5,324.6 453.5,330.65 461.5,336.69 469.5,342.74 477.5,347.78 485.5,349.4 493.5,350 501.5,353.83 509.5,356.85 517.5,359.88 525.5,361.9 533.5,363.91 541.5,366.53 549.5,370.65 557.5,375.28 565.5,379.31 573.5,382.94 581.5,385.97 589.5,389.4 597.5,390.4 605.5,392.42 613.5,396.45 621.5,399.07 629.5,402.1 637.5,406.13 645.5,408.55 653.5,410.16 661.5,414.19 669.5,423.95 677.5,430 685.5,435.04 693.5,442.1 701.5,452.18 709.5,459.23 717.5,463.27 725.5,467.3 733.5,467.9 741.5,469.92 749.5,480.4 757.5,494.52 765.5,508.63 773.5,520.73 781.5,530.91 789.5,539.07 797.5,547.14 805.5,555.2 813.5,558.63 821.5,562.26 829.5,566.29 837.5,572.6 845.5,572.6 853.5,572.6 861.5,572.6 869.5,572.6 877.5,572.4 885.5,570.48 893.5,567.46 901.5,564.03 909.5,562.02 917.5,559.4 925.5,559.4 933.5,562.02 941.5,564.84 949.5,566.85 957.5,566.85 965.5,567.46 973.5,564.84 981.5,562.82 989.5,562.82 997.5,563.43 1005.5,571.3 1013.5,578 1021.5,585.3 1029.5,591.9 1037.5,597.7" stroke="#f00" stroke-width="2"/>
<polyline points="13.5,152.2 21.5,152 29.5,151.3 37.5,152.5 45.5,153 53.5,153 61.5,152.5 69.5,152.2 77.5,151.5 85.5,151.5 93.5,152.5 101.5,154.3 109.5,155.8 117.5,157.7 125.5,158.4 133.5,157.1 141.5,155.6 149.5,154.8 157.5,152.02 165.5,152.02 173.5,154.03 181.5,154.84 189.5,158.47 197.5,166.9 205.5,176.7 213.5,186.9 221.5,192 229.5,197 237.5,201.8 245.5,204.1 253.5,208.47 261.5,212.5 269.5,215.52 277.5,218.55 285.5,218.95 293.5,218.95 301.5,218.95 309.5,224.6 317.5,229.64 325.5,232.26 333.5,240.73 341.5,250 349.5,257.06 357.5,269.15 365.5,281.25 373.5,289.31 381.5,297.38 389.5,304.44 397.5,311.49 405.5,320.56 413.5,330.65 421.5,341.73 429.5,351.81 437.5,356.85 445.5,358.87 453.5,366.94 461.5,371.98 469.5,376.61 477.5,376.61 485.5,373.99 493.5,372.58 501.5,374.6 509.5,377.02 517.5,378.63 525.5,379.03 533.5,380.65 541.5,383.06 549.5,384.76 557.5,389.4 565.5,395.44 573.5,399.48 581.5,402.5 589.5,406.53 597.5,405.52 605.5,404.92 613.5,410.56 621.5,415.6 629.5,417.62 637.5,421.65 645.5,422.26 653.5,424.68 661.5,429.35 669.5,442.1 677.5,451.17 685.5,460.24 693.5,470.32 701.5,483.43 709.5,491.49 717.5,494.11 725.5,494.11 733.5,490.89 741.5,490.89 749.5,510.65 757.5,533.93 765.5,552.18 773.5,568.31 781.5,579.4 789.5,585.44 797.5,593.51 805.5,598.95 813.5,596.13 821.5,595.52 829.5,598.15 837.5,600.97 845.5,598.15 853.5,592.5 861.5,588.63 869.5,584.6 877.5,580.97 885.5,574.11 893.5,566.85 901.5,559.4 909.5,557.38 917.5,553.95 925.5,553.95 933.5,559.4 941.5,566.05 949.5,570.48 957.5,570.48 965.5,568.87 973.5,564.84 981.5,560.81 989.5,560.4 997.5,561.41 1005.5,576.53 1013.5,592.66 1021.5,603.75 1029.5,613.83 1037.5,621.9" stroke="#00f" stroke-width="2"/>
<polyline points="12.5,171.6 165.5,137.7 773.3,641.9 909.6,523.7 1021.1,661.3" stroke="#8b4513" stroke-width="2"/>
<polyline points="773.3,641.9 1166,549" stroke="#800000" stroke-width="2"/>
<path d="M1057.7 575H1064.6V587.6H1069.3L1061.1 596L1052.9 587.6H1057.7Z" stroke="#f00" stroke-width="1.45" fill="#fff" stroke-linejoin="miter"/>
</g>
</svg>
<div class="abs" style="left:12px;top:109px;width:1303px;height:565px;border:1px solid #000;"></div>
<div class="abs" style="left:13px;top:112px;width:219px;height:11px;background:#fff"></div>
<div class="abs" style="left:16px;top:116px;width:0;height:0;border-left:4px solid transparent;border-right:4px solid transparent;border-top:4px solid #000"></div>
<div class="abs" style="left:28.00px;top:111.67px;font-size:9.6px;line-height:12px;color:#000;white-space:pre;transform:scaleX(0.9605);transform-origin:0 0;">EURJPYh,H4  134.523 134.538 134.502 134.530</div>
<div class="abs" style="left:1317px;top:111px;width:3px;height:1px;background:#000"></div>
<div class="abs" style="left:1322.40px;top:104.84px;font-size:9.7px;line-height:12px;color:#000;white-space:pre;transform:scaleX(0.9326);transform-origin:0 0;">147.850</div>
<div class="abs" style="left:1317px;top:144px;width:3px;height:1px;background:#000"></div>
<div class="abs" style="left:1322.40px;top:137.84px;font-size:9.7px;line-height:12px;color:#000;white-space:pre;transform:scaleX(0.9326);transform-origin:0 0;">147.030</div>
<div class="abs" style="left:1317px;top:177px;width:3px;height:1px;background:#000"></div>
<div class="abs" style="left:1322.40px;top:170.84px;font-size:9.7px;line-height:12px;color:#000;white-space:pre;transform:scaleX(0.9326);transform-origin:0 0;">146.210</div>
<div class="abs" style="left:1317px;top:210px;width:3px;height:1px;background:#000"></div>
<div class="abs" style="left:1322.40px;top:203.84px;font-size:9.7px;line-height:12px;color:#000;white-space:pre;transform:scaleX(0.9326);transform-origin:0 0;">145.410</div>
<div class="abs" style="left:1317px;top:243px;width:3px;height:1px;background:#000"></div>
<div class="abs" style="left:1322.40px;top:236.84px;font-size:9.7px;line-height:12px;color:#000;white-space:pre;transform:scaleX(0.9326);transform-origin:0 0;">144.590</div>
<div class="abs" style="left:1317px;top:276px;width:3px;height:1px;background:#000"></div>
<div class="abs" style="left:1322.40px;top:269.84px;font-size:9.7px;line-height:12px;color:#000;white-space:pre;transform:scaleX(0.9326);transform-origin:0 0;">143.770</div>
<div class="abs" style="left:1317px;top:309px;width:3px;height:1px;background:#000"></div>
<div class="abs" style="left:1322.40px;top:302.84px;font-size:9.7px;line-height:12px;color:#000;white-space:pre;transform:scaleX(0.9326);transform-origin:0 0;">142.950</div>
<div class="abs" style="left:1317px;top:342px;width:3px;height:1px;background:#000"></div>
<div class="abs" style="left:1322.40px;top:335.84px;font-size:9.7px;line-height:12px;color:#000;white-space:pre;transform:scaleX(0.9326);transform-origin:0 0;">142.130</div>
<div class="abs" style="left:1317px;top:375px;width:3px;height:1px;background:#000"></div>
<div class="abs" style="left:1322.40px;top:368.84px;font-size:9.7px;line-height:12px;color:#000;white-space:pre;transform:scaleX(0.9326);transform-origin:0 0;">141.310</div>
<div class="abs" style="left:1317px;top:408px;width:3px;height:1px;background:#000"></div>
<div class="abs" style="left:1322.40px;top:401.84px;font-size:9.7px;line-height:12px;color:#000;white-space:pre;transform:scaleX(0.9326);transform-origin:0 0;">140.490</div>
<div class="abs" style="left:1317px;top:441px;width:3px;height:1px;background:#000"></div>
<div class="abs" style="left:1322.40px;top:434.84px;font-size:9.7px;line-height:12px;color:#000;white-space:pre;transform:scaleX(0.9326);transform-origin:0 0;">139.670</div>
<div class="abs" style="left:1317px;top:474px;width:3px;height:1px;background:#000"></div>
<div class="abs" style="left:1322.40px;top:467.84px;font-size:9.7px;line-height:12px;color:#000;white-space:pre;transform:scaleX(0.9326);transform-origin:0 0;">138.850</div>
<div class="abs" style="left:1317px;top:507px;width:3px;height:1px;background:#000"></div>
<div class="abs" style="left:1322.40px;top:500.84px;font-size:9.7px;line-height:12px;color:#000;white-space:pre;transform:scaleX(0.9326);transform-origin:0 0;">138.030</div>
<div class="abs" style="left:1317px;top:540px;width:3px;height:1px;background:#000"></div>
<div class="abs" style="left:1322.40px;top:533.84px;font-size:9.7px;line-height:12px;color:#000;white-space:pre;transform:scaleX(0.9326);transform-origin:0 0;">137.230</div>
<div class="abs" style="left:1317px;top:573px;width:3px;height:1px;background:#000"></div>
<div class="abs" style="left:1322.40px;top:566.84px;font-size:9.7px;line-height:12px;color:#000;white-space:pre;transform:scaleX(0.9326);transform-origin:0 0;">136.410</div>
<div class="abs" style="left:1317px;top:606px;width:3px;height:1px;background:#000"></div>
<div class="abs" style="left:1322.40px;top:599.84px;font-size:9.7px;line-height:12px;color:#000;white-space:pre;transform:scaleX(0.9326);transform-origin:0 0;">135.590</div>
<div class="abs" style="left:1317px;top:639px;width:3px;height:1px;background:#000"></div>
<div class="abs" style="left:1322.40px;top:632.84px;font-size:9.7px;line-height:12px;color:#000;white-space:pre;transform:scaleX(0.9326);transform-origin:0 0;">134.770</div>
<div class="abs" style="left:1317px;top:672px;width:3px;height:1px;background:#000"></div>
<div class="abs" style="left:1322.40px;top:665.84px;font-size:9.7px;line-height:12px;color:#000;white-space:pre;transform:scaleX(0.9326);transform-origin:0 0;">133.950</div>
<div class="abs" style="left:1318px;top:609px;width:41px;height:11px;background:#800000"></div>
<div class="abs" style="left:1322.40px;top:608.64px;font-size:9.7px;line-height:12px;color:#fff;white-space:pre;transform:scaleX(0.9326);transform-origin:0 0;">135.375</div>
<div class="abs" style="left:1318px;top:643px;width:41px;height:11px;background:#000"></div>
<div class="abs" style="left:1322.40px;top:642.74px;font-size:9.7px;line-height:12px;color:#fff;white-space:pre;transform:scaleX(0.9326);transform-origin:0 0;">134.530</div>
<div class="abs" style="left:13px;top:676px;width:1px;height:3px;background:#000"></div>
<div class="abs" style="left:12.20px;top:678.74px;font-size:9.7px;line-height:12px;color:#000;white-space:pre;transform:scaleX(0.9371);transform-origin:0 0;">23 Dec 2014</div>
<div class="abs" style="left:77px;top:676px;width:1px;height:3px;background:#000"></div>
<div class="abs" style="left:76.20px;top:678.74px;font-size:9.7px;line-height:12px;color:#000;white-space:pre;transform:scaleX(0.9371);transform-origin:0 0;">25 Dec 20:00</div>
<div class="abs" style="left:141px;top:676px;width:1px;height:3px;background:#000"></div>
<div class="abs" style="left:140.20px;top:678.74px;font-size:9.7px;line-height:12px;color:#000;white-space:pre;transform:scaleX(0.9371);transform-origin:0 0;">29 Dec 02:00</div>
<div class="abs" style="left:205px;top:676px;width:1px;height:3px;background:#000"></div>
<div class="abs" style="left:204.20px;top:678.74px;font-size:9.7px;line-height:12px;color:#000;white-space:pre;transform:scaleX(0.9371);transform-origin:0 0;">30 Dec 08:00</div>
<div class="abs" style="left:269px;top:676px;width:1px;height:3px;background:#000"></div>
<div class="abs" style="left:268.20px;top:678.74px;font-size:9.7px;line-height:12px;color:#000;white-space:pre;transform:scaleX(0.9371);transform-origin:0 0;">31 Dec 16:00</div>
<div class="abs" style="left:333px;top:676px;width:1px;height:3px;background:#000"></div>
<div class="abs" style="left:332.20px;top:678.74px;font-size:9.7px;line-height:12px;color:#000;white-space:pre;transform:scaleX(0.9371);transform-origin:0 0;">4 Jan 22:00</div>
<div class="abs" style="left:397px;top:676px;width:1px;height:3px;background:#000"></div>
<div class="abs" style="left:396.20px;top:678.74px;font-size:9.7px;line-height:12px;color:#000;white-space:pre;transform:scaleX(0.9371);transform-origin:0 0;">6 Jan 04:00</div>
<div class="abs" style="left:461px;top:676px;width:1px;height:3px;background:#000"></div>
<div class="abs" style="left:460.20px;top:678.74px;font-size:9.7px;line-height:12px;color:#000;white-space:pre;transform:scaleX(0.9371);transform-origin:0 0;">7 Jan 12:00</div>
<div class="abs" style="left:525px;top:676px;width:1px;height:3px;background:#000"></div>
<div class="abs" style="left:524.20px;top:678.74px;font-size:9.7px;line-height:12px;color:#000;white-space:pre;transform:scaleX(0.9371);transform-origin:0 0;">8 Jan 20:00</div>
<div class="abs" style="left:589px;top:676px;width:1px;height:3px;background:#000"></div>
<div class="abs" style="left:588.20px;top:678.74px;font-size:9.7px;line-height:12px;color:#000;white-space:pre;transform:scaleX(0.9371);transform-origin:0 0;">12 Jan 02:00</div>
<div class="abs" style="left:653px;top:676px;width:1px;height:3px;background:#000"></div>
<div class="abs" style="left:652.20px;top:678.74px;font-size:9.7px;line-height:12px;color:#000;white-space:pre;transform:scaleX(0.9371);transform-origin:0 0;">13 Jan 08:00</div>
<div class="abs" style="left:717px;top:676px;width:1px;height:3px;background:#000"></div>
<div class="abs" style="left:716.20px;top:678.74px;font-size:9.7px;line-height:12px;color:#000;white-space:pre;transform:scaleX(0.9371);transform-origin:0 0;">14 Jan 16:00</div>
<div class="abs" style="left:781px;top:676px;width:1px;height:3px;background:#000"></div>
<div class="abs" style="left:780.20px;top:678.74px;font-size:9.7px;line-height:12px;color:#000;white-space:pre;transform:scaleX(0.9371);transform-origin:0 0;">16 Jan 00:00</div>
<div class="abs" style="left:845px;top:676px;width:1px;height:3px;background:#000"></div>
<div class="abs" style="left:844.20px;top:678.74px;font-size:9.7px;line-height:12px;color:#000;white-space:pre;transform:scaleX(0.9371);transform-origin:0 0;">19 Jan 06:00</div>
<div class="abs" style="left:909px;top:676px;width:1px;height:3px;background:#000"></div>
<div class="abs" style="left:908.20px;top:678.74px;font-size:9.7px;line-height:12px;color:#000;white-space:pre;transform:scaleX(0.9371);transform-origin:0 0;">20 Jan 12:00</div>
<div class="abs" style="left:973px;top:676px;width:1px;height:3px;background:#000"></div>
<div class="abs" style="left:972.20px;top:678.74px;font-size:9.7px;line-height:12px;color:#000;white-space:pre;transform:scaleX(0.9371);transform-origin:0 0;">21 Jan 20:00</div>
<div class="abs" style="left:1037px;top:676px;width:1px;height:3px;background:#000"></div>
<div class="abs" style="left:1036.20px;top:678.74px;font-size:9.7px;line-height:12px;color:#000;white-space:pre;transform:scaleX(0.9371);transform-origin:0 0;">23 Jan 04:00</div>
<div class="abs" style="left:1359px;top:107px;width:1px;height:588px;background:#e3e3e3"></div>
<div class="abs" style="left:9px;top:693px;width:1352px;height:1px;background:#e6e6e6"></div>
<div class="abs" style="left:8px;top:694px;width:1353px;height:1px;background:#fff"></div>
<div class="abs" style="left:8px;top:695px;width:1353px;height:1px;background:#000"></div>
<div class="abs" style="left:8px;top:696px;width:1px;height:19px;background:#a0a0a0"></div>
<div class="abs" style="left:9px;top:696px;width:1px;height:19px;background:#696969"></div>
<div class="abs" style="left:10px;top:696px;width:1px;height:19px;background:#fff"></div>
<div class="abs" style="left:22.20px;top:697.19px;font-size:11px;line-height:14px;color:#6d6d6d;white-space:pre;transform:scaleX(0.9188);transform-origin:0 0;">USDCHFh,M30</div>
<div class="abs" style="left:114.20px;top:697.19px;font-size:11px;line-height:14px;color:#6d6d6d;white-space:pre;transform:scaleX(0.9075);transform-origin:0 0;">EURUSDh,M30</div>
<div class="abs" style="left:206.30px;top:697.19px;font-size:11px;line-height:14px;color:#6d6d6d;white-space:pre;transform:scaleX(0.8968);transform-origin:0 0;">GBPUSDh,H1</div>
<div class="abs" style="left:291.00px;top:697.19px;font-size:11px;line-height:14px;color:#6d6d6d;white-space:pre;transform:scaleX(0.9184);transform-origin:0 0;">USDJPYh,H4</div>
<div class="abs" style="left:364px;top:695px;width:84px;height:19px;background:#fff;border:1px solid #000;border-top:none;box-sizing:border-box;box-shadow:1px 1px 0 #b4b4b4"></div>
<div class="abs" style="left:374.70px;top:697.19px;font-size:11px;line-height:14px;color:#000;white-space:pre;transform:scaleX(0.9229);transform-origin:0 0;">EURJPYh,H4</div>
<div class="abs" style="left:458.50px;top:697.19px;font-size:11px;line-height:14px;color:#6d6d6d;white-space:pre;transform:scaleX(0.9017);transform-origin:0 0;">GBPCHFh,M30</div>
<div class="abs" style="left:551.90px;top:697.19px;font-size:11px;line-height:14px;color:#6d6d6d;white-space:pre;transform:scaleX(0.9112);transform-origin:0 0;">AUDUSDh,H1</div>
<div class="abs" style="left:637.60px;top:697.19px;font-size:11px;line-height:14px;color:#6d6d6d;white-space:pre;transform:scaleX(0.8928);transform-origin:0 0;">GBPJPYh,H4</div>
<div class="abs" style="left:718.20px;top:697.19px;font-size:11px;line-height:14px;color:#6d6d6d;white-space:pre;transform:scaleX(0.8925);transform-origin:0 0;">EURGBPh,H1</div>
<div class="abs" style="left:803.60px;top:697.19px;font-size:11px;line-height:14px;color:#6d6d6d;white-space:pre;transform:scaleX(0.9213);transform-origin:0 0;">USDCADh,H4</div>
<div class="abs" style="left:890.30px;top:697.19px;font-size:11px;line-height:14px;color:#6d6d6d;white-space:pre;transform:scaleX(0.9199);transform-origin:0 0;">XAUUSDh,Daily</div>
<div class="abs" style="left:986.30px;top:697.19px;font-size:11px;line-height:14px;color:#6d6d6d;white-space:pre;transform:scaleX(0.9241);transform-origin:0 0;">USDCADh,Daily</div>
<div class="abs" style="left:1081.60px;top:697.19px;font-size:11px;line-height:14px;color:#6d6d6d;white-space:pre;transform:scaleX(0.9179);transform-origin:0 0;">NZDUSDh,H4</div>
<div class="abs" style="left:1166.50px;top:697.19px;font-size:11px;line-height:14px;color:#6d6d6d;white-space:pre;transform:scaleX(0.9275);transform-origin:0 0;">AUDNZDh,Daily</div>
<div class="abs sep" style="left:104px;top:698px;height:13px;background:#6d6d6d"></div>
<div class="abs sep" style="left:196px;top:698px;height:13px;background:#6d6d6d"></div>
<div class="abs sep" style="left:280px;top:698px;height:13px;background:#6d6d6d"></div>
<div class="abs sep" style="left:540px;top:698px;height:13px;background:#6d6d6d"></div>
<div class="abs sep" style="left:628px;top:698px;height:13px;background:#6d6d6d"></div>
<div class="abs sep" style="left:708px;top:698px;height:13px;background:#6d6d6d"></div>
<div class="abs sep" style="left:792px;top:698px;height:13px;background:#6d6d6d"></div>
<div class="abs sep" style="left:880px;top:698px;height:13px;background:#6d6d6d"></div>
<div class="abs sep" style="left:976px;top:698px;height:13px;background:#6d6d6d"></div>
<div class="abs sep" style="left:1072px;top:698px;height:13px;background:#6d6d6d"></div>
<div class="abs sep" style="left:1156px;top:698px;height:13px;background:#6d6d6d"></div>
<div class="abs sep" style="left:1252px;top:698px;height:13px;background:#6d6d6d"></div>
<div class="abs" style="left:1333px;top:702px;width:0;height:0;border-top:3px solid transparent;border-bottom:3px solid transparent;border-right:4px solid #a0a0a0"></div>
<div class="abs" style="left:1350px;top:702px;width:0;height:0;border-top:3px solid transparent;border-bottom:3px solid transparent;border-left:4px solid #a0a0a0"></div>
<div class="abs" style="left:8px;top:715px;width:1353px;height:1px;background:#fff"></div>
<div class="abs" style="left:10.40px;top:719.69px;font-size:11px;line-height:14px;color:#000;white-space:pre;transform:scaleX(1.0342);transform-origin:0 0;">Для справки, нажмите F1</div>
<div class="abs sep" style="left:635px;top:719px;height:16px;background:#a8a8a8"></div>
<div class="abs sep" style="left:636px;top:719px;height:16px;background:#fff"></div>
<div class="abs sep" style="left:751px;top:719px;height:16px;background:#a8a8a8"></div>
<div class="abs sep" style="left:752px;top:719px;height:16px;background:#fff"></div>
<div class="abs sep" style="left:853px;top:719px;height:16px;background:#a8a8a8"></div>
<div class="abs sep" style="left:854px;top:719px;height:16px;background:#fff"></div>
<div class="abs sep" style="left:924px;top:719px;height:16px;background:#a8a8a8"></div>
<div class="abs sep" style="left:925px;top:719px;height:16px;background:#fff"></div>
<div class="abs sep" style="left:995px;top:719px;height:16px;background:#a8a8a8"></div>
<div class="abs sep" style="left:996px;top:719px;height:16px;background:#fff"></div>
<div class="abs sep" style="left:1063px;top:719px;height:16px;background:#a8a8a8"></div>
<div class="abs sep" style="left:1064px;top:719px;height:16px;background:#fff"></div>
<div class="abs sep" style="left:1133px;top:719px;height:16px;background:#a8a8a8"></div>
<div class="abs sep" style="left:1134px;top:719px;height:16px;background:#fff"></div>
<div class="abs sep" style="left:1199px;top:719px;height:16px;background:#a8a8a8"></div>
<div class="abs sep" style="left:1200px;top:719px;height:16px;background:#fff"></div>
<div class="abs" style="left:641.60px;top:719.69px;font-size:11px;line-height:14px;color:#000;white-space:pre;transform:scaleX(1.0616);transform-origin:0 0;">Default</div>
<div class="abs" style="left:757.50px;top:719.69px;font-size:11px;line-height:14px;color:#000;white-space:pre;transform:scaleX(0.9739);transform-origin:0 0;">2015.01.22 00:00</div>
<div class="abs" style="left:860.00px;top:719.69px;font-size:11px;line-height:14px;color:#000;white-space:pre;transform:scaleX(0.9737);transform-origin:0 0;">O: 136.879</div>
<div class="abs" style="left:930.10px;top:719.69px;font-size:11px;line-height:14px;color:#000;white-space:pre;transform:scaleX(0.9811);transform-origin:0 0;">H: 137.306</div>
<div class="abs" style="left:1001.70px;top:719.69px;font-size:11px;line-height:14px;color:#000;white-space:pre;transform:scaleX(0.9424);transform-origin:0 0;">L: 136.762</div>
<div class="abs" style="left:1069.60px;top:719.69px;font-size:11px;line-height:14px;color:#000;white-space:pre;transform:scaleX(0.9550);transform-origin:0 0;">C: 137.249</div>
<div class="abs" style="left:1138.80px;top:719.69px;font-size:11px;line-height:14px;color:#000;white-space:pre;transform:scaleX(0.9810);transform-origin:0 0;">V: 15964</div>
<div class="abs" style="left:1256.30px;top:719.69px;font-size:11px;line-height:14px;color:#000;white-space:pre;transform:scaleX(1.0073);transform-origin:0 0;">30186/32 kb</div>
<svg class="abs" style="left:1205px;top:721px" width="24" height="12" viewBox="0 0 24 12" shape-rendering="crispEdges"><rect x="0" y="0" width="2" height="9" fill="#4a7000"/><rect x="0" y="10" width="2" height="2" fill="#002850"/><rect x="3" y="0" width="2" height="8" fill="#4a7000"/><rect x="3" y="9" width="2" height="3" fill="#002850"/><rect x="6" y="0" width="2" height="7" fill="#4a7000"/><rect x="6" y="8" width="2" height="4" fill="#002850"/><rect x="9" y="0" width="2" height="6" fill="#4a7000"/><rect x="9" y="7" width="2" height="5" fill="#002850"/><rect x="12" y="0" width="2" height="5" fill="#4a7000"/><rect x="12" y="6" width="2" height="6" fill="#002850"/><rect x="15" y="0" width="2" height="4" fill="#4a7000"/><rect x="15" y="5" width="2" height="7" fill="#002850"/><rect x="18" y="0" width="2" height="3" fill="#4a7000"/><rect x="18" y="4" width="2" height="8" fill="#002850"/><rect x="21" y="0" width="2" height="2" fill="#4a7000"/><rect x="21" y="3" width="2" height="9" fill="#002850"/></svg>
<svg class="abs" style="left:1346px;top:722px" width="14" height="14" viewBox="0 0 14 14"><path d="M13.5 1.5L1.5 13.5M13.5 5.5L5.5 13.5M13.5 9.5L9.5 13.5" stroke="#a0a0a0" stroke-width="1"/><path d="M13.5 2.5L2.5 13.5M13.5 6.5L6.5 13.5M13.5 10.5L10.5 13.5" stroke="#fff" stroke-width="1"/></svg>
<div class="abs" style="left:0;top:728px;width:1366px;height:16px;background:rgba(40,110,75,0.5)"></div>
<div class="abs" style="left:0;top:728px;width:1366px;height:16px;overflow:hidden">
<div class="abs" style="left:176px;top:1px;width:57px;height:20px;background:rgba(255,255,255,0.17);border:1px solid rgba(255,255,255,0.33)"></div>
<div class="abs" style="left:362px;top:1px;width:57px;height:20px;background:rgba(255,255,255,0.17);border:1px solid rgba(255,255,255,0.33)"></div>
<div class="abs" style="left:424px;top:1px;width:57px;height:20px;background:rgba(255,255,255,0.17);border:1px solid rgba(255,255,255,0.33)"></div>
<div class="abs" style="left:548px;top:1px;width:57px;height:20px;background:rgba(255,255,255,0.17);border:1px solid rgba(255,255,255,0.33)"></div>
<div class="abs" style="left:610px;top:1px;width:57px;height:20px;background:rgba(255,255,255,0.17);border:1px solid rgba(255,255,255,0.33)"></div>
<div class="abs" style="left:486px;top:1px;width:57px;height:20px;background:rgba(255,255,255,0.33);border:1px solid rgba(255,255,255,0.75)"></div>
<svg class="abs" style="left:12px;top:7px" width="28" height="28" viewBox="0 0 28 28"><path d="M0 3.4L10.8 1.9V13H0ZM12 1.7L26 0V13H12Z" fill="#fff"/></svg>
<div class="abs" style="left:66px;top:5px;width:30px;height:20px;background:#0a8a0a"></div>
<svg class="abs" style="left:70px;top:7px" width="24" height="12" viewBox="0 0 24 12"><path d="M7 9C6 2 13 1 13.5 9" stroke="#fff" stroke-width="1.3" fill="none"/><path d="M11 9C11.5 4 16 4 16.5 9" stroke="#fff" stroke-width="1.1" fill="none"/><path d="M3 8.5H21L20 14H4Z" fill="#fff"/></svg>
<svg class="abs" style="left:128px;top:5px" width="32" height="16" viewBox="0 0 32 16"><path d="M0 3L17 0V16H0Z" fill="#2a569a"/><rect x="17" y="3" width="13" height="13" fill="#fff" stroke="#2a569a" stroke-width="1.5"/><path d="M20 7H28M20 10H28" stroke="#2a569a" stroke-width="1.2"/><path d="M4 10L6 16M8 10L6 16M8 10L10 16M12 10L10 16" stroke="#fff" stroke-width="1.3" fill="none"/></svg>
<svg class="abs" style="left:191px;top:5.5px" width="30" height="30" viewBox="0 0 30 30"><defs><clipPath id="cc"><circle cx="15" cy="15" r="14"/></clipPath></defs><g clip-path="url(#cc)"><rect width="30" height="30" fill="#e2412f"/><path d="M15 8H30V30H8Z" fill="#fbc92d"/><path d="M0 6L9 18L6 30H0Z" fill="#2da94f"/></g><circle cx="15" cy="15" r="6.6" fill="#fff"/><circle cx="15" cy="15" r="5.2" fill="#4a8af4"/></svg>
<svg class="abs" style="left:250px;top:5px" width="32" height="20" viewBox="0 0 32 20"><path d="M3 0H19L29 10V20H3Z" fill="#bcd6f4"/><path d="M3 0H19L29 10" stroke="#78a4dc" stroke-width="1.5" fill="none"/><path d="M19 0V10H29" fill="#dceafa" stroke="#78a4dc" stroke-width="1"/><circle cx="13" cy="13" r="6" fill="#f0f6fe" stroke="#5a8ad0" stroke-width="1.5"/><path d="M11 9.5L15 7V12" fill="#5a8ad0"/></svg>
<svg class="abs" style="left:313px;top:5px" width="32" height="20" viewBox="0 0 32 20"><path d="M2 0H21L30 9V20H2Z" fill="#f6f6f6"/><path d="M21 0V9H30Z" fill="#d8d8d8"/><text x="9.5" y="15.5" font-family="Liberation Sans" font-weight="bold" font-size="16.5" fill="#e02020">Я</text></svg>
<svg class="abs" style="left:376px;top:4px" width="30" height="30" viewBox="0 0 30 30"><circle cx="15" cy="15" r="14.5" fill="#f6f6f6"/><path d="M3 1L15 13L27 1" stroke="#e02020" stroke-width="5.5" fill="none"/></svg>
<svg class="abs" style="left:438px;top:5.5px" width="30" height="30" viewBox="0 0 30 30"><circle cx="14" cy="14" r="14" fill="#18a8e8"/><path d="M9 12C9 7 19 7 19 11" stroke="#fff" stroke-width="3" fill="none"/></svg>
<svg class="abs" style="left:499px;top:8px" width="32" height="30" viewBox="0 0 32 30"><circle cx="15" cy="16" r="15" fill="#a01c12"/><ellipse cx="23" cy="10" rx="7" ry="6" fill="#e8c8c0" opacity="0.75"/></svg>
<svg class="abs" style="left:562px;top:4px" width="32" height="30" viewBox="0 0 32 30"><ellipse cx="15" cy="9" rx="15" ry="9" fill="#f49a20"/><path d="M4 7H26L24 14H6Z" fill="#fbead0"/><path d="M7 8V12M10 8V12M13 8V12M16 8V12M19 8V12M22 8V12" stroke="#e8b070" stroke-width="1"/></svg>
<svg class="abs" style="left:623.5px;top:3.5px" width="32" height="30" viewBox="0 0 32 30"><rect x="0" y="0" width="32" height="30" fill="#fff"/><path d="M6 12C9 3 20 1 25 6C18 5 11 10 9 22C7 19 5.5 15 6 12Z" fill="#2a70c8"/><path d="M19 3C27 5 29 16 24 24C25 16 23 9 17 7Z" fill="#e86020"/></svg>
<div class="abs" style="left:1311.20px;top:5.84px;font-size:12px;line-height:15px;color:#fff;white-space:pre;transform:scaleX(0.8178);transform-origin:0 0;">7:09</div>
<svg class="abs" style="left:1150px;top:13.5px" width="100" height="10" viewBox="0 0 100 10"><path d="M8 3L11 0L14 3Z" fill="#fff"/><rect x="26" y="0.7" width="14" height="9" fill="none" stroke="#fff" stroke-width="1.4"/><path d="M51 1H53V4H51ZM55 0.5H63V6H55Z" fill="#fff"/><path d="M75 1.2H88" stroke="#fff" stroke-width="1.6"/><circle cx="77" cy="1.5" r="1.6" fill="none" stroke="#fff" stroke-width="1"/></svg>
</div>
</body></html>
